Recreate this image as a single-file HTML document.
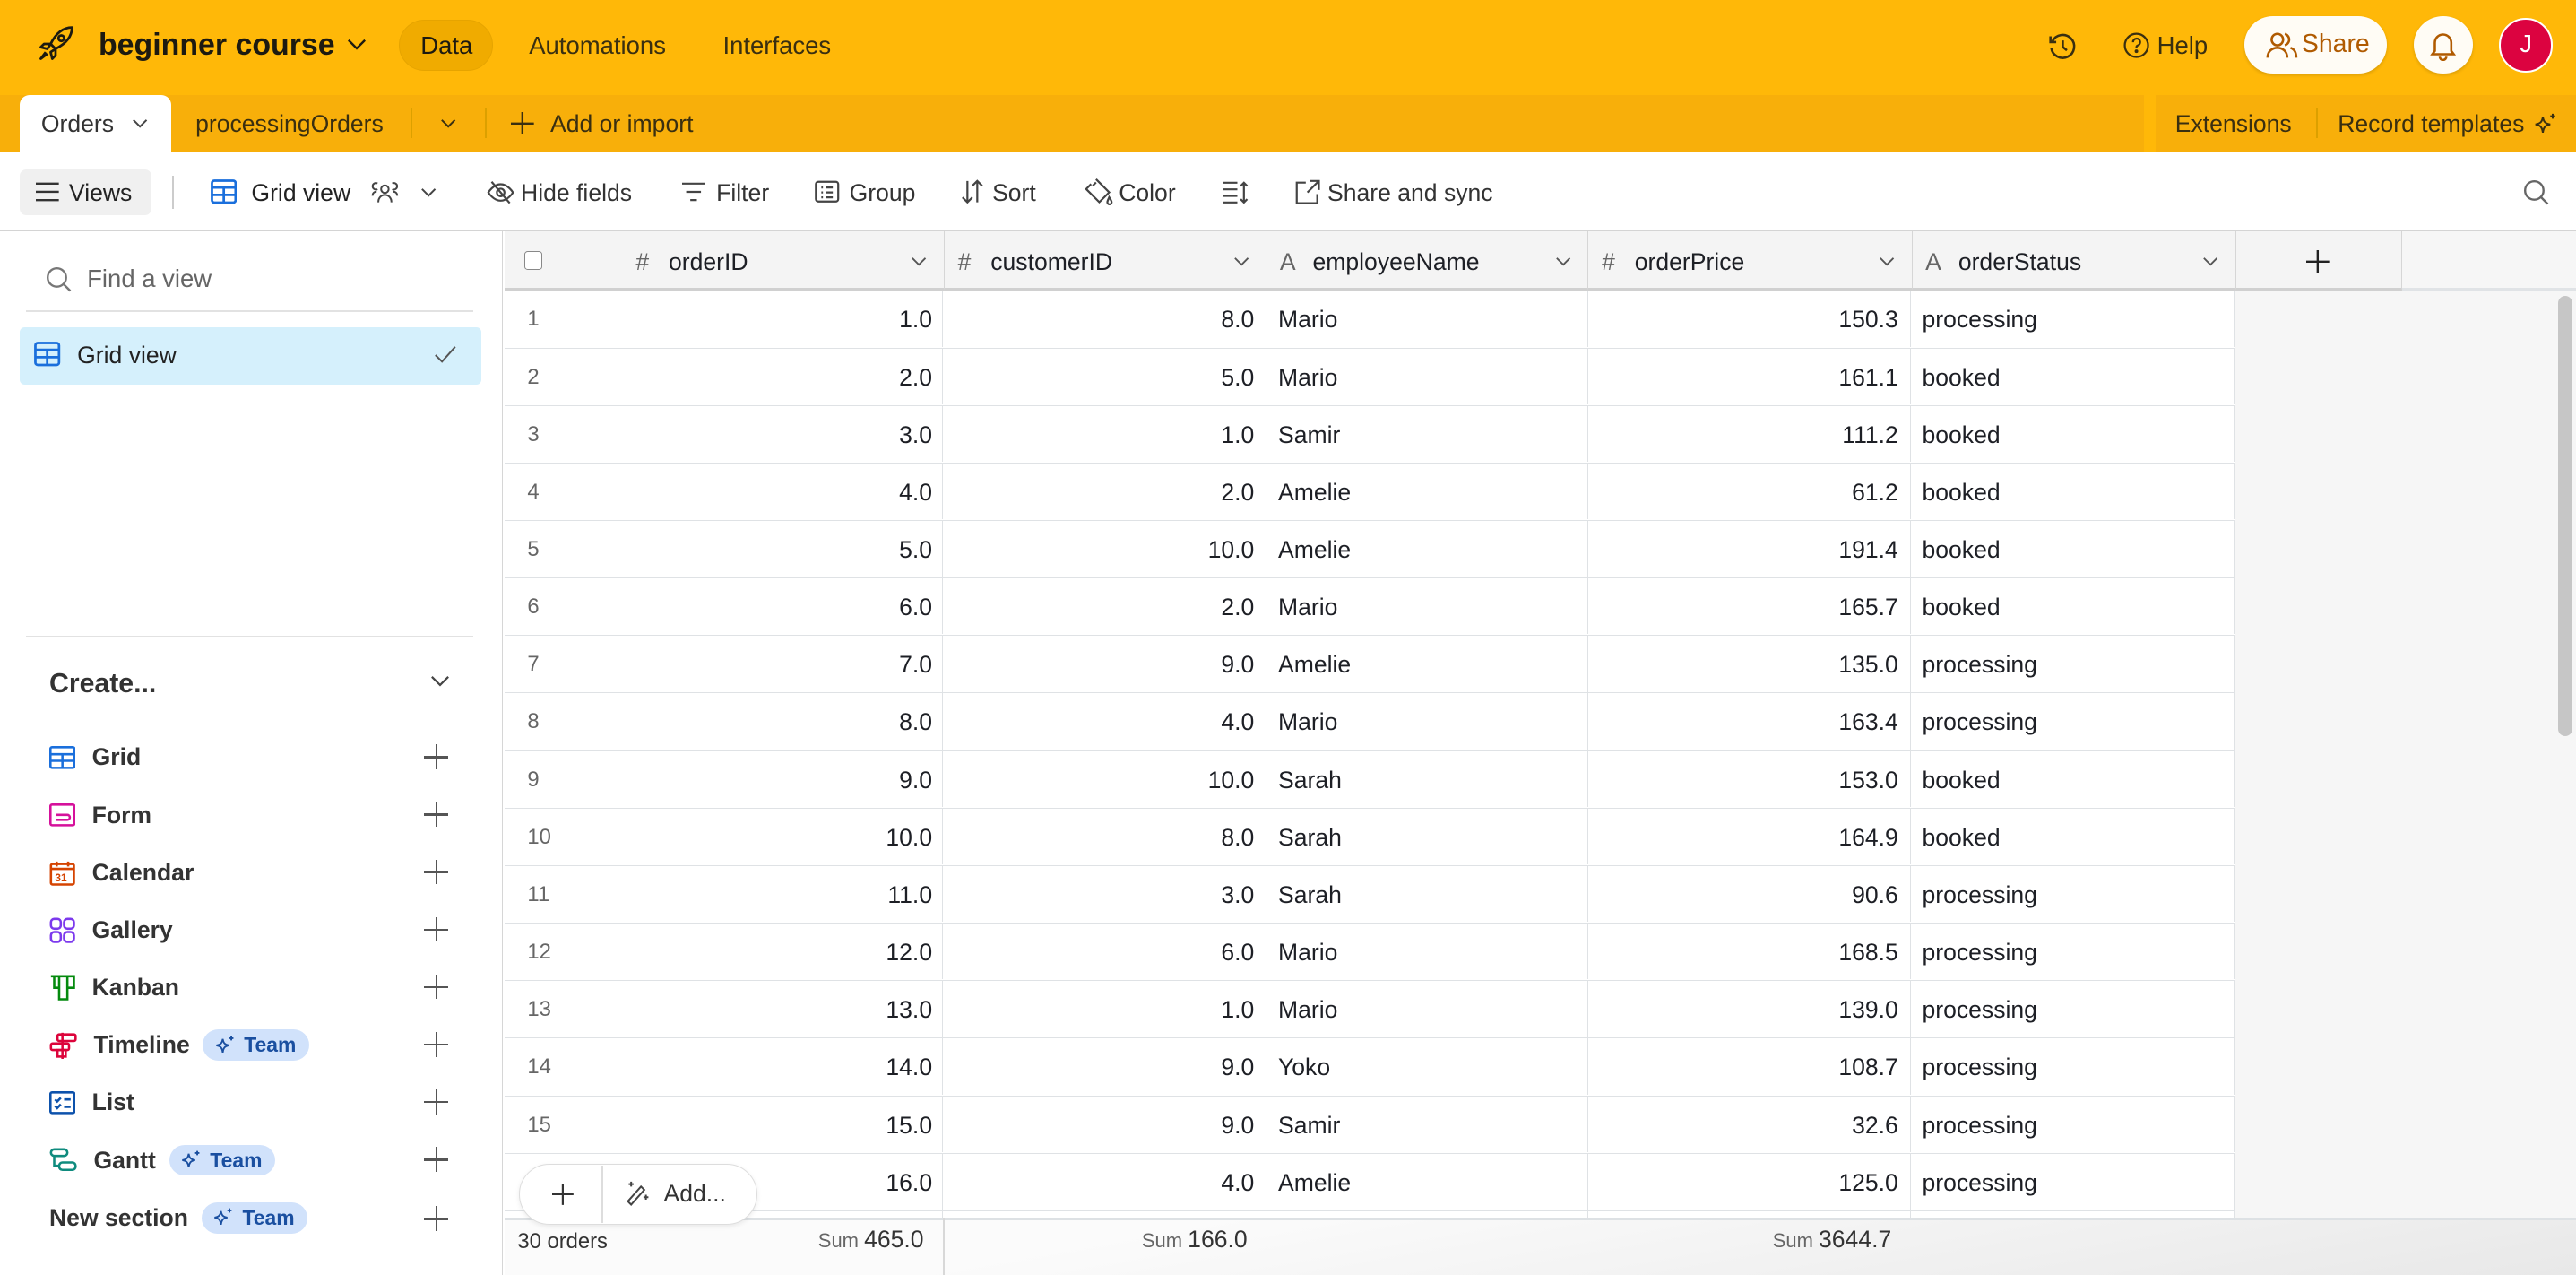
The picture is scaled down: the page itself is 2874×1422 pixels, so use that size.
<!DOCTYPE html>
<html><head><meta charset="utf-8">
<style>
*{box-sizing:border-box;margin:0;padding:0}
html,body{width:2874px;height:1422px;overflow:hidden;background:#fff}
#r{zoom:1.83291;width:1568px;height:776px;position:relative;overflow:hidden;font-family:"Liberation Sans",sans-serif;color:#1d1f25;font-size:14.5px}
.a{position:absolute}
.top{left:0;top:0;width:1568px;height:58px;background:#ffb808}
.tabs{left:0;top:58px;width:1568px;height:35px;background:#f8af0a;border-bottom:1px solid #e2a000}
.tb{left:0;top:93px;width:1568px;height:48px;background:#fff;border-bottom:1px solid #d4d4d4}
.side{left:0;top:141px;width:306px;height:635px;background:#fff;border-right:1px solid #d6d6d6}
svg{display:block}
.t{white-space:nowrap}
.row{position:absolute;left:307px;height:35px;display:flex;border-bottom:1px solid #dfe2e5;background:#fff}
.row div{height:34px;line-height:35px;border-right:1px solid #dfe2e5;white-space:nowrap}
.c0{width:267px;display:flex;justify-content:space-between;padding:0 6px 0 0}
.c0 span:first-child{color:#666;font-size:13px;padding-left:14px;width:40px}
.c1,.c3{width:197px;text-align:right;padding-right:7px}
.c2{width:196px;padding-left:7px}
.c3{width:196px}
.c4{width:197px;padding-left:7px}
.team{display:inline-flex;align-items:center;gap:5px;background:#d1e2fb;color:#1a4fa0;border-radius:10px;height:19px;padding:0 8px 0 7px;font-size:12.5px;font-weight:bold;vertical-align:middle;margin-left:-2px}
.it{position:absolute;left:30px;height:20px;display:flex;align-items:center;gap:10px;font-size:14.5px;color:#333;font-weight:bold}
.plus{position:absolute;left:258px;width:15px;height:15px}
.plus:before{content:"";position:absolute;left:0;top:7px;width:15px;height:1.3px;background:#555}
.plus:after{content:"";position:absolute;left:7px;top:0;width:1.3px;height:15px;background:#555}
.hd{position:absolute;top:141px;height:36px;background:#f4f4f4;border-bottom:2px solid #d0d0d0;border-right:1px solid #d6d6d6;display:flex;align-items:center;font-size:14.5px;padding-top:3px}
.chev{position:absolute;right:10px;top:15px}
</style></head><body><div id="r">
<div class="a top"></div>
<svg class="a" style="left:22px;top:15px" width="24" height="24" viewBox="0 0 24 24" fill="none" stroke="#1d1a10" stroke-width="1.5" stroke-linejoin="round"><path d="M22 2c-6 0-10 4-13 10l3 3c6-3 10-7 10-13z"/><circle cx="15.5" cy="8.5" r="1.7"/><path d="M9 12l-4 0-2 2 4 1zM12 15v4l-2 2-1-4z"/><path d="M6 17l-3 4 4-3"/></svg>
<div class="a t" style="left:60px;top:17px;font-size:18.5px;font-weight:bold;color:#1d1a10">beginner course</div>
<svg class="a" style="left:211px;top:23px" width="12" height="8" viewBox="0 0 12 8" fill="none" stroke="#1d1a10" stroke-width="1.3"><path d="M1 1.5l5 5 5-5"/></svg>
<div class="a" style="left:243px;top:12px;width:57px;height:31px;border-radius:16px;background:#f0ab00;border:1px solid #e6a400"></div>
<div class="a t" style="left:256px;top:19px;font-size:15px;color:#1d1a10">Data</div>
<div class="a t" style="left:322px;top:19px;font-size:15px;color:#3a2f10">Automations</div>
<div class="a t" style="left:440px;top:19px;font-size:15px;color:#3a2f10">Interfaces</div>
<svg class="a" style="left:1246px;top:19px" width="18" height="18" viewBox="0 0 18 18" fill="none" stroke="#3a2f10" stroke-width="1.4"><path d="M3.2 6A7 7 0 1 1 2.5 10"/><path d="M2 3v3.5h3.5"/><path d="M9.5 5.5V9.5l2.5 2"/></svg>
<svg class="a" style="left:1292px;top:19px" width="17" height="17" viewBox="0 0 18 18" fill="none" stroke="#3a2f10" stroke-width="1.3"><circle cx="9" cy="9" r="7.5"/><path d="M6.8 7a2.3 2.3 0 1 1 2.8 2.2c-.5.2-.6.6-.6 1.2"/><circle cx="9" cy="12.8" r=".5" fill="#3a2f10"/></svg>
<div class="a t" style="left:1313px;top:19px;font-size:15px;color:#3a2f10">Help</div>
<div class="a" style="left:1366px;top:10px;width:87px;height:35px;border-radius:18px;background:#fffcf5;box-shadow:0 1px 2px rgba(0,0,0,.15)"></div>
<svg class="a" style="left:1379px;top:19px" width="20" height="17" viewBox="0 0 20 17" fill="none" stroke="#b05a00" stroke-width="1.4"><circle cx="7" cy="5" r="3.5"/><path d="M1 16c0-4 3-6 6-6s6 2 6 6"/><path d="M11.5 1.6a3.5 3.5 0 0 1 0 6.8M15 10c2 .7 3.5 2.5 3.5 6"/></svg>
<div class="a t" style="left:1401px;top:18px;font-size:15.5px;color:#b05a00">Share</div>
<div class="a" style="left:1469px;top:10px;width:36px;height:35px;border-radius:50%;background:#fffcf5;box-shadow:0 1px 2px rgba(0,0,0,.15)"></div>
<svg class="a" style="left:1479px;top:18px" width="16" height="19" viewBox="0 0 16 19" fill="none" stroke="#b05a00" stroke-width="1.4"><path d="M3 13V8a5 5 0 0 1 10 0v5l1.5 2h-13z"/><path d="M6 16.5a2 2 0 0 0 4 0"/></svg>
<div class="a" style="left:1521px;top:11px;width:33px;height:33px;border-radius:50%;background:#dc0340;border:1.5px solid #fff;color:#fff;font-size:15px;text-align:center;line-height:30px">J</div>

<div class="a tabs"></div>
<div class="a" style="left:12px;top:58px;width:92px;height:35px;background:#fff;border-radius:6px 6px 0 0"></div>
<div class="a t" style="left:25px;top:67px;font-size:14.5px;color:#333">Orders</div>
<svg class="a" style="left:80px;top:72px" width="10" height="6" viewBox="0 0 10 6" fill="none" stroke="#444" stroke-width="1.1"><path d="M1 1l4 4 4-4"/></svg>
<div class="a t" style="left:119px;top:67px;font-size:14.5px;color:#3a2f10">processingOrders</div>
<div class="a" style="left:250px;top:66px;width:1px;height:18px;background:#dca000"></div>
<svg class="a" style="left:268px;top:72px" width="10" height="6" viewBox="0 0 10 6" fill="none" stroke="#3a2f10" stroke-width="1.1"><path d="M1 1l4 4 4-4"/></svg>
<div class="a" style="left:295px;top:66px;width:1px;height:18px;background:#dca000"></div>
<svg class="a" style="left:311px;top:68px" width="14" height="14" viewBox="0 0 14 14" stroke="#3a2f10" stroke-width="1.3"><path d="M7 0v14M0 7h14"/></svg>
<div class="a t" style="left:335px;top:67px;font-size:14.5px;color:#3a2f10">Add or import</div>
<div class="a" style="left:1305px;top:58px;width:7px;height:35px;background:#ffb808"></div>
<div class="a t" style="left:1324px;top:67px;font-size:14.5px;color:#3a2f10">Extensions</div>
<div class="a" style="left:1410px;top:66px;width:1px;height:18px;background:#dca000"></div>
<div class="a t" style="left:1423px;top:67px;font-size:14.5px;color:#3a2f10">Record templates</div>
<svg class="a" style="left:1542px;top:68px" width="15" height="15" viewBox="0 0 15 15" fill="none" stroke="#3a2f10" stroke-width="1.1"><path d="M6 3c.5 3 1.5 4 4.5 4.5C7.5 8 6.5 9 6 12.5 5.5 9 4.5 8 1.5 7.5 4.5 7 5.5 6 6 3z"/><path d="M12 1v3M10.5 2.5h3"/></svg>

<div class="a tb"></div>
<div class="a" style="left:12px;top:103px;width:80px;height:28px;background:#f0f0f0;border-radius:4px"></div>
<svg class="a" style="left:22px;top:111px" width="14" height="12" viewBox="0 0 14 12" stroke="#333" stroke-width="1.3"><path d="M0 1h14M0 6h14M0 11h14"/></svg>
<div class="a t" style="left:42px;top:109px;font-size:14.5px;color:#222">Views</div>
<div class="a" style="left:105px;top:107px;width:1px;height:20px;background:#ccc"></div>
<svg class="a" style="left:128px;top:109px" width="16" height="15" viewBox="0 0 16 15" fill="none" stroke="#1a6fdc" stroke-width="1.5"><rect x=".8" y=".8" width="14.4" height="13.4" rx="1.5"/><path d="M1 5h14M1 9.5h14M8 5v9"/></svg>
<div class="a t" style="left:153px;top:109px;font-size:14.5px;color:#222">Grid view</div>
<svg class="a" style="left:225px;top:109px" width="19" height="15" viewBox="0 0 19 15" fill="none" stroke="#444" stroke-width="1.1"><circle cx="9.5" cy="6" r="2.3"/><path d="M5.5 14c0-3 2-4.5 4-4.5s4 1.5 4 4.5"/><path d="M5 2.5a2 2 0 1 0 0 3.5M2 10c0-1.5 1-2.5 2.5-2.5M14 2.5a2 2 0 1 1 0 3.5M17 10c0-1.5-1-2.5-2.5-2.5"/></svg>
<svg class="a" style="left:256px;top:114px" width="10" height="6" viewBox="0 0 10 6" fill="none" stroke="#444" stroke-width="1.1"><path d="M1 1l4 4 4-4"/></svg>
<svg class="a" style="left:296px;top:109px" width="17" height="16" viewBox="0 0 17 16" fill="none" stroke="#444" stroke-width="1.2"><path d="M1 8s3-5 7.5-5S16 8 16 8s-3 5-7.5 5S1 8 1 8z"/><circle cx="8.5" cy="8" r="2.3"/><path d="M3 1.5l11 13"/></svg>
<div class="a t" style="left:317px;top:109px;font-size:14.5px;color:#333">Hide fields</div>
<svg class="a" style="left:415px;top:111px" width="14" height="12" viewBox="0 0 14 12" stroke="#444" stroke-width="1.2"><path d="M0 1h14M2.5 6h9M5 11h4"/></svg>
<div class="a t" style="left:436px;top:109px;font-size:14.5px;color:#333">Filter</div>
<svg class="a" style="left:496px;top:109px" width="15" height="15" viewBox="0 0 15 15" fill="none" stroke="#444" stroke-width="1.2"><rect x=".7" y="1.5" width="13.6" height="12" rx="1.5"/><path d="M4 5h1M7 5h4M4 8h1M7 8h4M4 11h1M7 11h4"/></svg>
<div class="a t" style="left:517px;top:109px;font-size:14.5px;color:#333">Group</div>
<svg class="a" style="left:585px;top:109px" width="14" height="15" viewBox="0 0 14 15" fill="none" stroke="#444" stroke-width="1.2"><path d="M4 1v13M1 11l3 3 3-3M10 14V1M7 4l3-3 3 3"/></svg>
<div class="a t" style="left:604px;top:109px;font-size:14.5px;color:#333">Sort</div>
<svg class="a" style="left:660px;top:108px" width="18" height="17" viewBox="0 0 18 17" fill="none" stroke="#444" stroke-width="1.2"><path d="M7 1l8 8-6 6-8-8 3-3"/><path d="M5 5l2-2"/><path d="M15 12c1 1.5 1.5 2.3 1.5 3a1.3 1.3 0 0 1-2.6 0c0-.7.5-1.5 1.1-3z"/></svg>
<div class="a t" style="left:681px;top:109px;font-size:14.5px;color:#333">Color</div>
<svg class="a" style="left:744px;top:110px" width="16" height="14" viewBox="0 0 16 14" fill="none" stroke="#444" stroke-width="1.2"><path d="M0 1h9M0 5h9M0 9h9M0 13h9M13 1v12M11 3l2-2 2 2M11 11l2 2 2-2"/></svg>
<svg class="a" style="left:788px;top:109px" width="16" height="16" viewBox="0 0 16 16" fill="none" stroke="#444" stroke-width="1.2"><path d="M7 2H1.5v12.5H14V9"/><path d="M9.5 1H15v5.5M15 1L8 8"/></svg>
<div class="a t" style="left:808px;top:109px;font-size:14.5px;color:#333">Share and sync</div>
<svg class="a" style="left:1536px;top:109px" width="16" height="16" viewBox="0 0 16 16" fill="none" stroke="#666" stroke-width="1.3"><circle cx="6.8" cy="6.8" r="5.6"/><path d="M11 11l4 4"/></svg>

<div class="a side"></div>
<svg class="a" style="left:28px;top:162px" width="16" height="16" viewBox="0 0 16 16" fill="none" stroke="#777" stroke-width="1.3"><circle cx="6.8" cy="6.8" r="5.6"/><path d="M11 11l4 4"/></svg>
<div class="a t" style="left:53px;top:161px;font-size:15px;color:#666">Find a view</div>
<div class="a" style="left:16px;top:189px;width:272px;height:1px;background:#e2e2e2"></div>
<div class="a" style="left:12px;top:199px;width:281px;height:35px;background:#d5f0fc;border-radius:3px"></div>
<svg class="a" style="left:21px;top:208px" width="16" height="15" viewBox="0 0 16 15" fill="none" stroke="#1a6fdc" stroke-width="1.5"><rect x=".8" y=".8" width="14.4" height="13.4" rx="1.5"/><path d="M1 5h14M1 9.5h14M8 5v9"/></svg>
<div class="a t" style="left:47px;top:208px;font-size:14.5px;color:#222">Grid view</div>
<svg class="a" style="left:264px;top:210px" width="14" height="11" viewBox="0 0 14 11" fill="none" stroke="#555" stroke-width="1.1"><path d="M1 6l4 4 8-9"/></svg>
<div class="a" style="left:16px;top:387px;width:272px;height:1px;background:#e2e2e2"></div>
<div class="a t" style="left:30px;top:407px;font-size:16.5px;color:#333;font-weight:bold">Create...</div>
<svg class="a" style="left:262px;top:411px" width="12" height="8" viewBox="0 0 12 8" fill="none" stroke="#444" stroke-width="1.2"><path d="M1 1l5 5 5-5"/></svg>

<div class="it" style="top:451px"><svg width="16" height="14" viewBox="0 0 16 14" fill="none" stroke="#1a6fdc" stroke-width="1.4"><rect x=".7" y=".7" width="14.6" height="12.6" rx="1"/><path d="M1 5h14M1 9h14M8 5v8"/></svg>Grid</div>
<div class="it" style="top:486px"><svg width="16" height="14" viewBox="0 0 16 14" fill="none" stroke="#d5119b" stroke-width="1.4"><rect x=".7" y=".7" width="14.6" height="12.6" rx="1"/><path d="M4 7h7M4 10h7a1.5 1.5 0 0 0 0-3"/></svg>Form</div>
<div class="it" style="top:521px"><svg width="16" height="16" viewBox="0 0 16 16" fill="none" stroke="#d54401" stroke-width="1.4"><rect x="1" y="2.5" width="14" height="12.5" rx="1"/><path d="M1 5.5h14M4.5 1v3M11.5 1v3"/><text x="3.5" y="13" font-size="6.5" fill="#d54401" stroke="none" font-weight="bold" font-family="Liberation Sans">31</text></svg>Calendar</div>
<div class="it" style="top:556px"><svg width="16" height="16" viewBox="0 0 16 16" fill="none" stroke="#7c39ed" stroke-width="1.4"><rect x="1" y="1" width="6" height="6" rx="2"/><rect x="9" y="1" width="6" height="6" rx="2"/><rect x="1" y="9" width="6" height="6" rx="2"/><rect x="9" y="9" width="6" height="6" rx="2"/></svg>Gallery</div>
<div class="it" style="top:591px"><svg width="16" height="16" viewBox="0 0 16 16" fill="none" stroke="#048a0e" stroke-width="1.4"><path d="M1 1h14v7h-4v7H6V8H3V1M6 1v7M11 1v7"/></svg>Kanban</div>
<div class="it" style="top:626px"><svg width="17" height="17" viewBox="0 0 17 17" fill="none" stroke="#dc043b" stroke-width="1.4"><path d="M8 1v16"/><rect x="5" y="2" width="11" height="4" rx="1"/><rect x="1" y="7.5" width="11" height="4" rx="1"/><rect x="5" y="11.5" width="5" height="4"/></svg>Timeline <span class="team"><svg width="13" height="13" viewBox="0 0 15 15" fill="none" stroke="#1a4fa0" stroke-width="1.2"><path d="M6 3c.5 3 1.5 4 4.5 4.5C7.5 8 6.5 9 6 12.5 5.5 9 4.5 8 1.5 7.5 4.5 7 5.5 6 6 3z"/><path d="M12 1v3M10.5 2.5h3"/></svg>Team</span></div>
<div class="it" style="top:661px"><svg width="16" height="14" viewBox="0 0 16 14" fill="none" stroke="#0d52ac" stroke-width="1.4"><rect x=".7" y=".7" width="14.6" height="12.6" rx="1"/><path d="M3.5 5l1.3 1.3L7 4M3.5 9l1.3 1.3L7 8M9 5h4M9 9.5h4"/></svg>List</div>
<div class="it" style="top:696px"><svg width="17" height="15" viewBox="0 0 17 15" fill="none" stroke="#0f8b7e" stroke-width="1.4"><rect x="1" y="1" width="10" height="4" rx="2"/><rect x="6" y="9" width="10" height="4.5" rx="2"/><path d="M3 5v6h3"/></svg>Gantt <span class="team"><svg width="13" height="13" viewBox="0 0 15 15" fill="none" stroke="#1a4fa0" stroke-width="1.2"><path d="M6 3c.5 3 1.5 4 4.5 4.5C7.5 8 6.5 9 6 12.5 5.5 9 4.5 8 1.5 7.5 4.5 7 5.5 6 6 3z"/><path d="M12 1v3M10.5 2.5h3"/></svg>Team</span></div>
<div class="it" style="top:731px">New section <span class="team"><svg width="13" height="13" viewBox="0 0 15 15" fill="none" stroke="#1a4fa0" stroke-width="1.2"><path d="M6 3c.5 3 1.5 4 4.5 4.5C7.5 8 6.5 9 6 12.5 5.5 9 4.5 8 1.5 7.5 4.5 7 5.5 6 6 3z"/><path d="M12 1v3M10.5 2.5h3"/></svg>Team</span></div>
<div class="plus" style="top:453px"></div><div class="plus" style="top:488px"></div><div class="plus" style="top:523px"></div><div class="plus" style="top:558px"></div><div class="plus" style="top:593px"></div><div class="plus" style="top:628px"></div><div class="plus" style="top:663px"></div><div class="plus" style="top:698px"></div><div class="plus" style="top:734px"></div>

<div class="a" style="left:307px;top:141px;width:1261px;height:600px;background:#f6f6f6"></div>
<div class="hd" style="left:307px;width:268px"><div style="position:absolute;left:12px;top:12px;width:11px;height:11px;border:1px solid #888;border-radius:2px;background:#fff"></div><span style="position:absolute;left:80px;color:#666">#</span><span style="position:absolute;left:100px">orderID</span><svg class="chev" width="10" height="6" viewBox="0 0 10 6" fill="none" stroke="#555"><path d="M1 1l4 4 4-4"/></svg></div>
<div class="hd" style="left:575px;width:196px"><span style="position:absolute;left:8px;color:#666">#</span><span style="position:absolute;left:28px">customerID</span><svg class="chev" width="10" height="6" viewBox="0 0 10 6" fill="none" stroke="#555"><path d="M1 1l4 4 4-4"/></svg></div>
<div class="hd" style="left:771px;width:196px"><span style="position:absolute;left:8px;color:#666">A</span><span style="position:absolute;left:28px">employeeName</span><svg class="chev" width="10" height="6" viewBox="0 0 10 6" fill="none" stroke="#555"><path d="M1 1l4 4 4-4"/></svg></div>
<div class="hd" style="left:967px;width:197px"><span style="position:absolute;left:8px;color:#666">#</span><span style="position:absolute;left:28px">orderPrice</span><svg class="chev" width="10" height="6" viewBox="0 0 10 6" fill="none" stroke="#555"><path d="M1 1l4 4 4-4"/></svg></div>
<div class="hd" style="left:1164px;width:197px"><span style="position:absolute;left:8px;color:#666">A</span><span style="position:absolute;left:28px">orderStatus</span><svg class="chev" width="10" height="6" viewBox="0 0 10 6" fill="none" stroke="#555"><path d="M1 1l4 4 4-4"/></svg></div>
<div class="hd" style="left:1361px;width:101px"><svg style="position:absolute;left:43px;top:11px" width="14" height="14" viewBox="0 0 14 14" stroke="#222" stroke-width="1.3"><path d="M7 0v14M0 7h14"/></svg></div>
<div class="a" style="left:1462px;top:175px;width:106px;height:2px;background:#e0e3e6"></div>

<div class="row" style="top:177px"><div class="c0"><span>1</span><span>1.0</span></div><div class="c1">8.0</div><div class="c2">Mario</div><div class="c3">150.3</div><div class="c4">processing</div></div>
<div class="row" style="top:212px"><div class="c0"><span>2</span><span>2.0</span></div><div class="c1">5.0</div><div class="c2">Mario</div><div class="c3">161.1</div><div class="c4">booked</div></div>
<div class="row" style="top:247px"><div class="c0"><span>3</span><span>3.0</span></div><div class="c1">1.0</div><div class="c2">Samir</div><div class="c3">111.2</div><div class="c4">booked</div></div>
<div class="row" style="top:282px"><div class="c0"><span>4</span><span>4.0</span></div><div class="c1">2.0</div><div class="c2">Amelie</div><div class="c3">61.2</div><div class="c4">booked</div></div>
<div class="row" style="top:317px"><div class="c0"><span>5</span><span>5.0</span></div><div class="c1">10.0</div><div class="c2">Amelie</div><div class="c3">191.4</div><div class="c4">booked</div></div>
<div class="row" style="top:352px"><div class="c0"><span>6</span><span>6.0</span></div><div class="c1">2.0</div><div class="c2">Mario</div><div class="c3">165.7</div><div class="c4">booked</div></div>
<div class="row" style="top:387px"><div class="c0"><span>7</span><span>7.0</span></div><div class="c1">9.0</div><div class="c2">Amelie</div><div class="c3">135.0</div><div class="c4">processing</div></div>
<div class="row" style="top:422px"><div class="c0"><span>8</span><span>8.0</span></div><div class="c1">4.0</div><div class="c2">Mario</div><div class="c3">163.4</div><div class="c4">processing</div></div>
<div class="row" style="top:457px"><div class="c0"><span>9</span><span>9.0</span></div><div class="c1">10.0</div><div class="c2">Sarah</div><div class="c3">153.0</div><div class="c4">booked</div></div>
<div class="row" style="top:492px"><div class="c0"><span>10</span><span>10.0</span></div><div class="c1">8.0</div><div class="c2">Sarah</div><div class="c3">164.9</div><div class="c4">booked</div></div>
<div class="row" style="top:527px"><div class="c0"><span>11</span><span>11.0</span></div><div class="c1">3.0</div><div class="c2">Sarah</div><div class="c3">90.6</div><div class="c4">processing</div></div>
<div class="row" style="top:562px"><div class="c0"><span>12</span><span>12.0</span></div><div class="c1">6.0</div><div class="c2">Mario</div><div class="c3">168.5</div><div class="c4">processing</div></div>
<div class="row" style="top:597px"><div class="c0"><span>13</span><span>13.0</span></div><div class="c1">1.0</div><div class="c2">Mario</div><div class="c3">139.0</div><div class="c4">processing</div></div>
<div class="row" style="top:632px"><div class="c0"><span>14</span><span>14.0</span></div><div class="c1">9.0</div><div class="c2">Yoko</div><div class="c3">108.7</div><div class="c4">processing</div></div>
<div class="row" style="top:667px"><div class="c0"><span>15</span><span>15.0</span></div><div class="c1">9.0</div><div class="c2">Samir</div><div class="c3">32.6</div><div class="c4">processing</div></div>
<div class="row" style="top:702px"><div class="c0"><span>16</span><span>16.0</span></div><div class="c1">4.0</div><div class="c2">Amelie</div><div class="c3">125.0</div><div class="c4">processing</div></div>
<div class="row" style="top:737px;height:5px"><div class="c0" style="height:5px"></div><div class="c1" style="height:5px"></div><div class="c2" style="height:5px"></div><div class="c3" style="height:5px"></div><div class="c4" style="height:5px"></div></div>

<div class="a" style="left:1557px;top:180px;width:9px;height:268px;background:#c6c6c6;border-radius:5px"></div>

<div class="a" style="left:307px;top:741px;width:1261px;height:35px;background:linear-gradient(170deg,#fbfbfb 30%,#e8e8e8 100%);border-top:2px solid #dde1e4"></div>
<div class="a" style="left:574px;top:741px;width:1px;height:35px;background:#d8d8d8"></div>
<div class="a t" style="left:315px;top:748px;font-size:13px;color:#333">30 orders</div>
<div class="a t" style="left:498px;top:746px;font-size:12px;color:#666">Sum <span style="font-size:14.5px;color:#333">465.0</span></div>
<div class="a t" style="left:695px;top:746px;font-size:12px;color:#666">Sum <span style="font-size:14.5px;color:#333">166.0</span></div>
<div class="a t" style="left:1079px;top:746px;font-size:12px;color:#666">Sum <span style="font-size:14.5px;color:#333">3644.7</span></div>

<div class="a" style="left:316px;top:708px;width:145px;height:37px;background:#fff;border:1px solid #ddd;border-radius:19px;box-shadow:0 1px 3px rgba(0,0,0,.08)"></div>
<div class="a" style="left:366px;top:709px;width:1px;height:35px;background:#ddd"></div>
<svg class="a" style="left:336px;top:720px" width="13" height="13" viewBox="0 0 13 13" stroke="#333" stroke-width="1.2"><path d="M6.5 0v13M0 6.5h13"/></svg>
<svg class="a" style="left:379px;top:718px" width="17" height="17" viewBox="0 0 17 17" fill="none" stroke="#444" stroke-width="1.1"><path d="M11 4l2 2-8 9-2-2z"/><path d="M5 1v3M3.5 2.5h3M14 9v3M12.5 10.5h3"/></svg>
<div class="a t" style="left:404px;top:718px;font-size:14.5px;color:#333">Add...</div>
</div></body></html>
